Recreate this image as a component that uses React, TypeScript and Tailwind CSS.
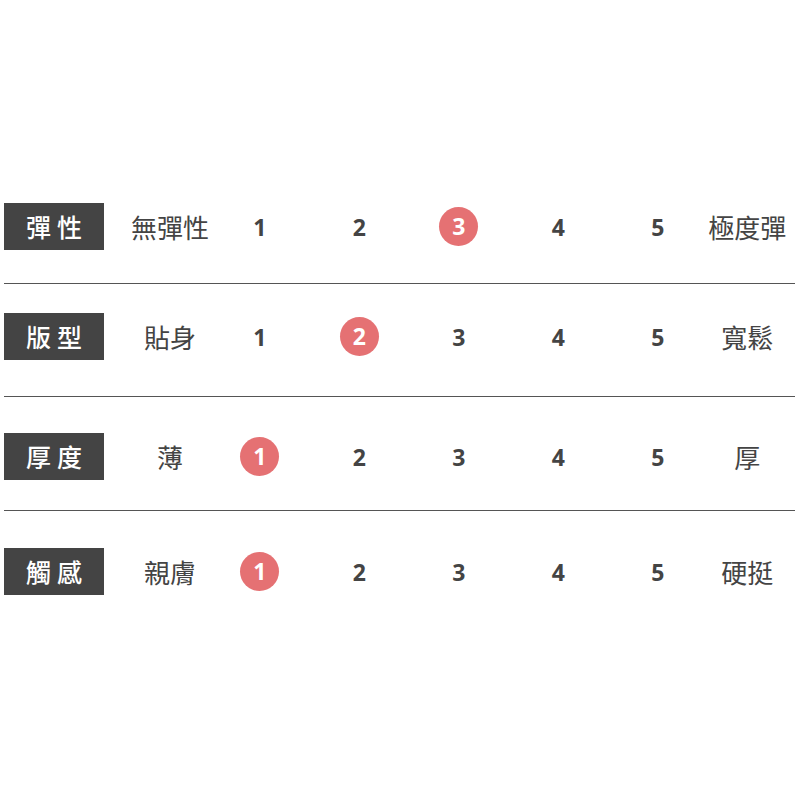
const rows = [
  { label: "彈性", start: "無彈性", end: "極度彈", value: 3, mt: "mt-[203px]" },
  { label: "版型", start: "貼身", end: "寬鬆", value: 2, mt: "mt-[29px]" },
  { label: "厚度", start: "薄", end: "厚", value: 1, mt: "mt-[36px]" },
  { label: "觸感", start: "親膚", end: "硬挺", value: 1, mt: "mt-[37px]" },
];

const lineGaps = ["mt-[33px]", "mt-[36px]", "mt-[30px]"];

const cjk = "font-['Noto_Sans_CJK_TC','Noto_Sans',sans-serif]";
const num = "font-['Open_Sans','Liberation_Sans',sans-serif]";

function ScaleRow({ row }: { row: (typeof rows)[number] }) {
  return (
    <div
      className={`${row.mt} grid h-[47px] grid-cols-[100px_106px_repeat(5,99.5px)_1fr] items-center text-[#444]`}
    >
      <div
        className={`flex h-full items-center justify-center bg-[#444] pl-[6px] text-[25px] font-medium tracking-[6px] text-white ${cjk}`}
      >
        {row.label}
      </div>
      <div className={`pl-[26px] text-center text-[26px] ${cjk}`}>{row.start}</div>
      {[1, 2, 3, 4, 5].map((n) => (
        <div key={n} className="flex items-center justify-center">
          {n === row.value ? (
            <span
              className={`flex h-[39px] w-[39px] items-center justify-center rounded-full bg-[#e57173] text-[23px] font-bold text-white ${num}`}
            >
              {n}
            </span>
          ) : (
            <span className={`pt-[2px] text-[23px] font-bold ${num}`}>{n}</span>
          )}
        </div>
      ))}
      <div className={`pr-[8px] text-center text-[26px] ${cjk}`}>{row.end}</div>
    </div>
  );
}

export default function App() {
  return (
    <div className="h-[800px] w-[800px] bg-white">
      <div className="ml-[4px] mr-[5px] flex flex-col">
        {rows.map((row, i) => (
          <div key={row.label}>
            <ScaleRow row={row} />
            {i < lineGaps.length && (
              <div className={`${lineGaps[i]} h-px bg-[#555]`} />
            )}
          </div>
        ))}
      </div>
    </div>
  );
}
